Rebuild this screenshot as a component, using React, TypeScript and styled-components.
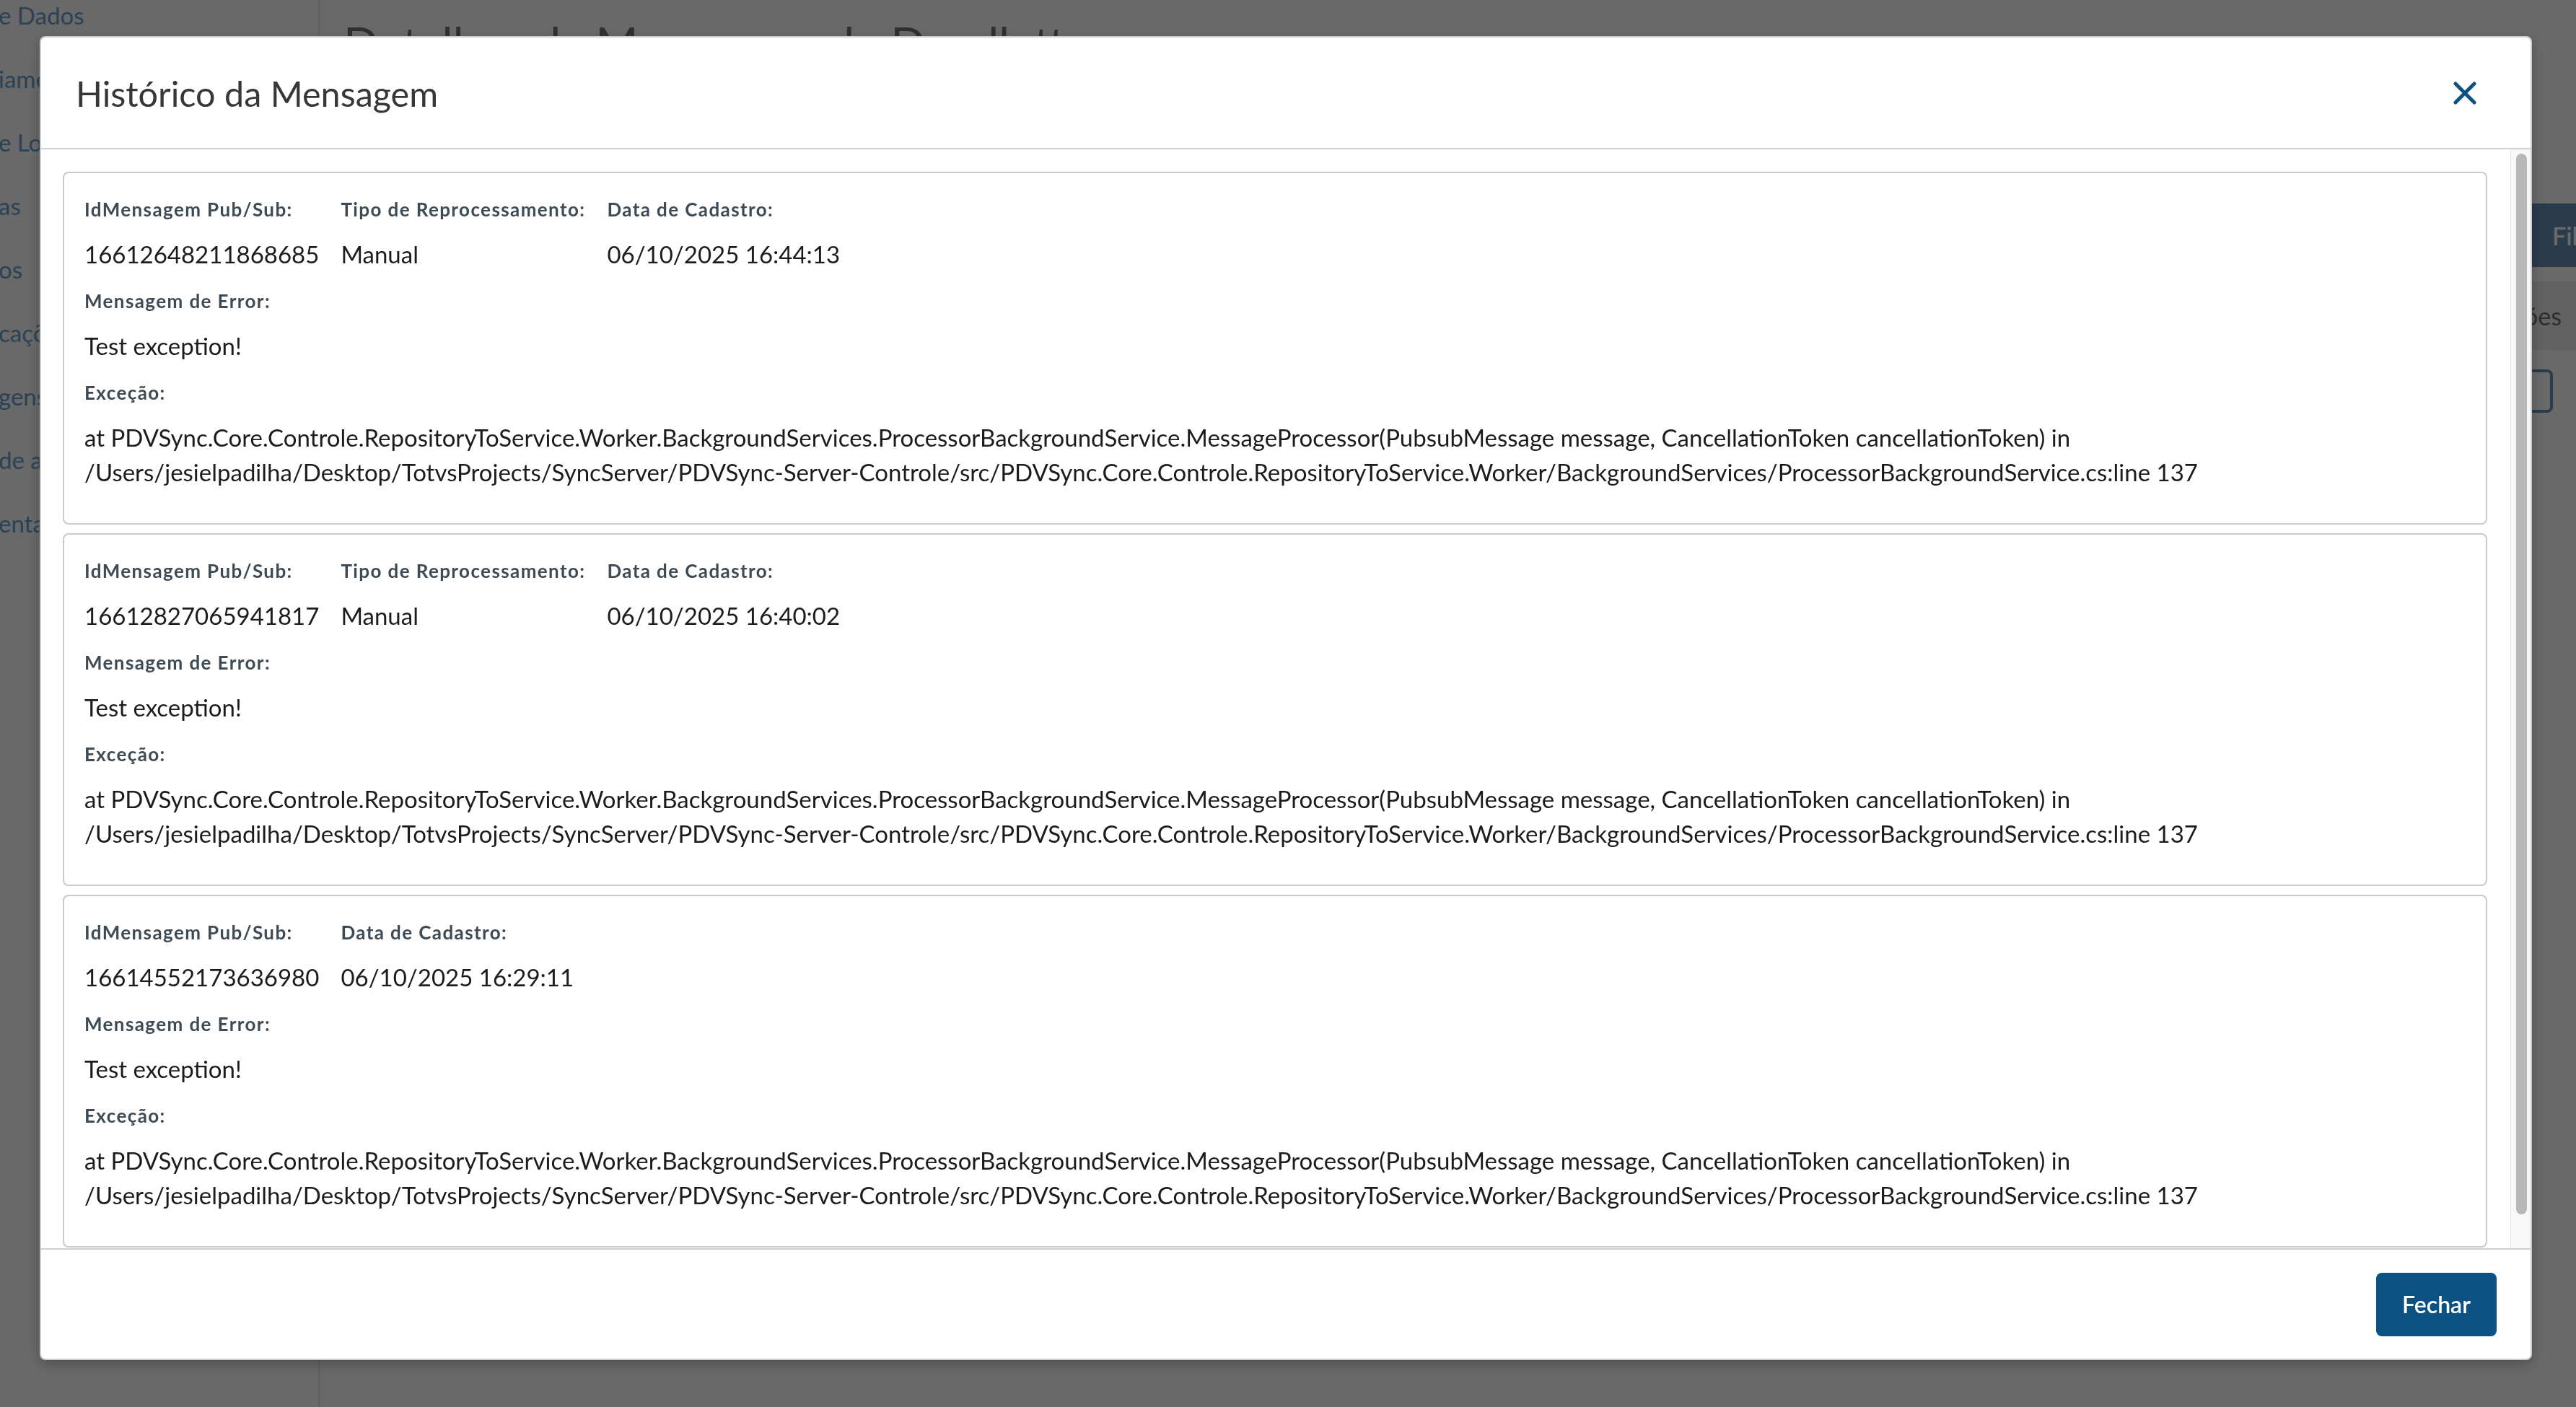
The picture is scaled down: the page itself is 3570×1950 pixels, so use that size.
import React from 'react';
import styled, { createGlobalStyle } from 'styled-components';

/* ===================== dados ===================== */

interface HistoryField {
  label: string;
  value: string;
}

interface HistoryEntry {
  fields: HistoryField[];
  error: string;
  exception: string;
}

const EXCEPTION_TEXT =
  'at PDVSync.Core.Controle.RepositoryToService.Worker.BackgroundServices.ProcessorBackgroundService.MessageProcessor(PubsubMessage message, CancellationToken cancellationToken) in /Users/jesielpadilha/Desktop/TotvsProjects/SyncServer/PDVSync-Server-Controle/src/PDVSync.Core.Controle.RepositoryToService.Worker/BackgroundServices/ProcessorBackgroundService.cs:line 137';

const HISTORY: HistoryEntry[] = [
  {
    fields: [
      { label: 'IdMensagem Pub/Sub:', value: '16612648211868685' },
      { label: 'Tipo de Reprocessamento:', value: 'Manual' },
      { label: 'Data de Cadastro:', value: '06/10/2025 16:44:13' },
    ],
    error: 'Test exception!',
    exception: EXCEPTION_TEXT,
  },
  {
    fields: [
      { label: 'IdMensagem Pub/Sub:', value: '16612827065941817' },
      { label: 'Tipo de Reprocessamento:', value: 'Manual' },
      { label: 'Data de Cadastro:', value: '06/10/2025 16:40:02' },
    ],
    error: 'Test exception!',
    exception: EXCEPTION_TEXT,
  },
  {
    fields: [
      { label: 'IdMensagem Pub/Sub:', value: '16614552173636980' },
      { label: 'Data de Cadastro:', value: '06/10/2025 16:29:11' },
    ],
    error: 'Test exception!',
    exception: EXCEPTION_TEXT,
  },
];

// itens do menu lateral (aparecem cortados atrás do modal)
const SIDE_ITEMS = ['e Dados', 'iamentos', 'e Lojas', 'as', 'os', 'cações', 'gens', 'de acesso', 'entação'];

/* ===================== componentes ===================== */

const CloseIcon: React.FC = () => (
  <svg width="32" height="32" viewBox="0 0 32 32" fill="none">
    <path d="M3 3 L29 29 M29 3 L3 29" stroke="#0b5282" strokeWidth="5" strokeLinecap="round" />
  </svg>
);

const HistoryCard: React.FC<{ entry: HistoryEntry }> = ({ entry }) => (
  <Card>
    <FieldRow>
      {entry.fields.map((f) => (
        <FieldColumn key={f.label}>
          <FieldLabel>{f.label}</FieldLabel>
          <FieldValue>{f.value}</FieldValue>
        </FieldColumn>
      ))}
    </FieldRow>
    <FieldBlock>
      <FieldLabel>Mensagem de Error:</FieldLabel>
      <FieldValue>{entry.error}</FieldValue>
    </FieldBlock>
    <FieldBlock>
      <FieldLabel>Exceção:</FieldLabel>
      <ExceptionText>{entry.exception}</ExceptionText>
    </FieldBlock>
  </Card>
);

const App: React.FC = () => {
  return (
    <>
      <GlobalStyle />
      <Page>
        <Sidebar>
          <SideNav>
            {SIDE_ITEMS.map((item) => (
              <SideItem key={item}>{item}</SideItem>
            ))}
          </SideNav>
        </Sidebar>
        <Main>
          <PageTitle>Detalhes da Mensagem de Deadletter</PageTitle>
          <FilterBar>
            <FilterButton>Filtrar</FilterButton>
          </FilterBar>
          <TableHead>
            <HeadCell>Ações</HeadCell>
          </TableHead>
          <TableRow>
            <RowAction />
          </TableRow>
        </Main>
      </Page>

      <Backdrop />

      <ModalWrap>
        <Modal>
          <ModalHeader>
            <ModalTitle>Histórico da Mensagem</ModalTitle>
            <CloseButton aria-label="Fechar">
              <CloseIcon />
            </CloseButton>
          </ModalHeader>
          <ModalBody>
            <BodyContent>
              {HISTORY.map((entry, i) => (
                <HistoryCard key={i} entry={entry} />
              ))}
            </BodyContent>
            {/* barra de rolagem desenhada (o navegador headless esconde a nativa) */}
            <ScrollTrack>
              <ScrollThumb />
            </ScrollTrack>
          </ModalBody>
          <ModalFooter>
            <PrimaryButton>Fechar</PrimaryButton>
          </ModalFooter>
        </Modal>
      </ModalWrap>
    </>
  );
};

/* ===================== estilos ===================== */

const GlobalStyle = createGlobalStyle`
  * { box-sizing: border-box; }
  html, body {
    margin: 0;
    padding: 0;
    width: 100%;
    height: 100%;
    overflow: hidden;
    background: #ffffff;
  }
  body {
    font-family: Lato, "Noto Sans", sans-serif;
  }
`;

/* página por trás do modal */
const Page = styled.div`
  display: flex;
  height: 100vh;
  width: 100vw;
  overflow: hidden;
`;

const Sidebar = styled.aside`
  width: 443px;
  flex-shrink: 0;
  border-right: 2px solid #e4e4e4;
  overflow: hidden;
`;

const SideNav = styled.nav`
  display: flex;
  flex-direction: column;
  margin-top: -23px;
  margin-left: -2px;
`;

const SideItem = styled.div`
  height: 88px;
  line-height: 88px;
  font-size: 33px;
  color: #68a0d1;
  white-space: nowrap;
`;

const Main = styled.main`
  flex: 1;
  display: flex;
  flex-direction: column;
  padding: 21px 0 0 33px;
  min-width: 0;
`;

const PageTitle = styled.h1`
  margin: 0;
  font-size: 64px;
  font-weight: 400;
  line-height: 77px;
  color: #747474;
  white-space: nowrap;
`;

const FilterBar = styled.div`
  display: flex;
  justify-content: flex-end;
  margin-top: 184px;
  margin-right: -120px;
`;

const FilterButton = styled.button`
  width: 210px;
  height: 88px;
  padding: 0 0 0 57px;
  text-align: left;
  border: none;
  border-radius: 8px;
  background: #668fb6;
  color: #ffffff;
  font-family: inherit;
  font-size: 34px;
  font-weight: 600;
`;

const TableHead = styled.div`
  display: flex;
  justify-content: flex-end;
  align-items: center;
  height: 95px;
  margin-top: 20px;
  padding-right: 20px;
  background: #eeeeee;
`;

const HeadCell = styled.span`
  font-size: 34px;
  color: #707070;
`;

const TableRow = styled.div`
  display: flex;
  justify-content: flex-end;
  padding: 27px 32px 0 0;
`;

const RowAction = styled.div`
  width: 64px;
  height: 60px;
  border: 4px solid #668fb6;
  border-radius: 8px;
`;

const Backdrop = styled.div`
  position: fixed;
  inset: 0;
  background: rgba(0, 0, 0, 0.588);
`;

/* modal */
const ModalWrap = styled.div`
  position: fixed;
  inset: 0;
  display: flex;
  padding: 50px 61px 65px 55px;
`;

const Modal = styled.section`
  flex: 1;
  display: flex;
  flex-direction: column;
  background: #ffffff;
  border: 2px solid rgba(0, 0, 0, 0.2);
  border-radius: 8px;
  box-shadow: 0 6px 18px rgba(0, 0, 0, 0.25);
  overflow: hidden;
  font-family: Lato, "Noto Sans", sans-serif;
`;

const ModalHeader = styled.header`
  display: flex;
  align-items: center;
  justify-content: space-between;
  height: 155px;
  flex-shrink: 0;
  padding: 0 75px 0 48px;
  border-bottom: 2px solid #cfcfcf;
`;

const ModalTitle = styled.h2`
  margin: 0;
  font-size: 48.5px;
  font-weight: 400;
  color: #373737;
`;

const CloseButton = styled.button`
  display: flex;
  padding: 0;
  border: none;
  background: none;
  cursor: pointer;
`;

const ModalBody = styled.div`
  flex: 1;
  min-height: 0;
  display: flex;
`;

const BodyContent = styled.div`
  flex: 1;
  min-width: 0;
  overflow: hidden;
  display: flex;
  flex-direction: column;
  gap: 12px;
  padding: 31px 32px 0 30px;
`;

const ScrollTrack = styled.div`
  width: 28px;
  flex-shrink: 0;
  display: flex;
  flex-direction: column;
  padding: 6px 5px 47px 7px;
  background: #f8f8f8;
  border-left: 1px solid #e6e6e6;
`;

const ScrollThumb = styled.div`
  flex: 1;
  background: #b8b8b8;
  border-radius: 8px;
`;

const Card = styled.article`
  flex-shrink: 0;
  border: 2px solid #cacaca;
  border-radius: 8px;
  padding: 32px 28px 24px;
`;

const FieldRow = styled.div`
  display: flex;
  gap: 30px;
  margin-bottom: 23px;
`;

const FieldColumn = styled.div`
  display: flex;
  flex-direction: column;
`;

const FieldBlock = styled.div`
  margin-bottom: 23px;
`;

const FieldLabel = styled.div`
  font-size: 26px;
  font-weight: 700;
  letter-spacing: 1.4px;
  line-height: 36px;
  color: #3e4b54;
  margin-bottom: 20px;
  white-space: nowrap;
`;

const FieldValue = styled.div`
  font-size: 33px;
  line-height: 48px;
  color: #1c1c1c;
  white-space: nowrap;
`;

const ExceptionText = styled.div`
  font-size: 33px;
  line-height: 48px;
  margin-top: 2px;
  color: #1c1c1c;
`;

const ModalFooter = styled.footer`
  display: flex;
  justify-content: flex-end;
  align-items: center;
  height: 153px;
  flex-shrink: 0;
  padding-right: 47px;
  border-top: 2px solid #cfcfcf;
`;

const PrimaryButton = styled.button`
  height: 88px;
  padding: 0 36px;
  border: none;
  border-radius: 8px;
  background: #0b5282;
  color: #ffffff;
  font-family: inherit;
  font-size: 32px;
  font-weight: 600;
  cursor: pointer;
`;

export default App;
